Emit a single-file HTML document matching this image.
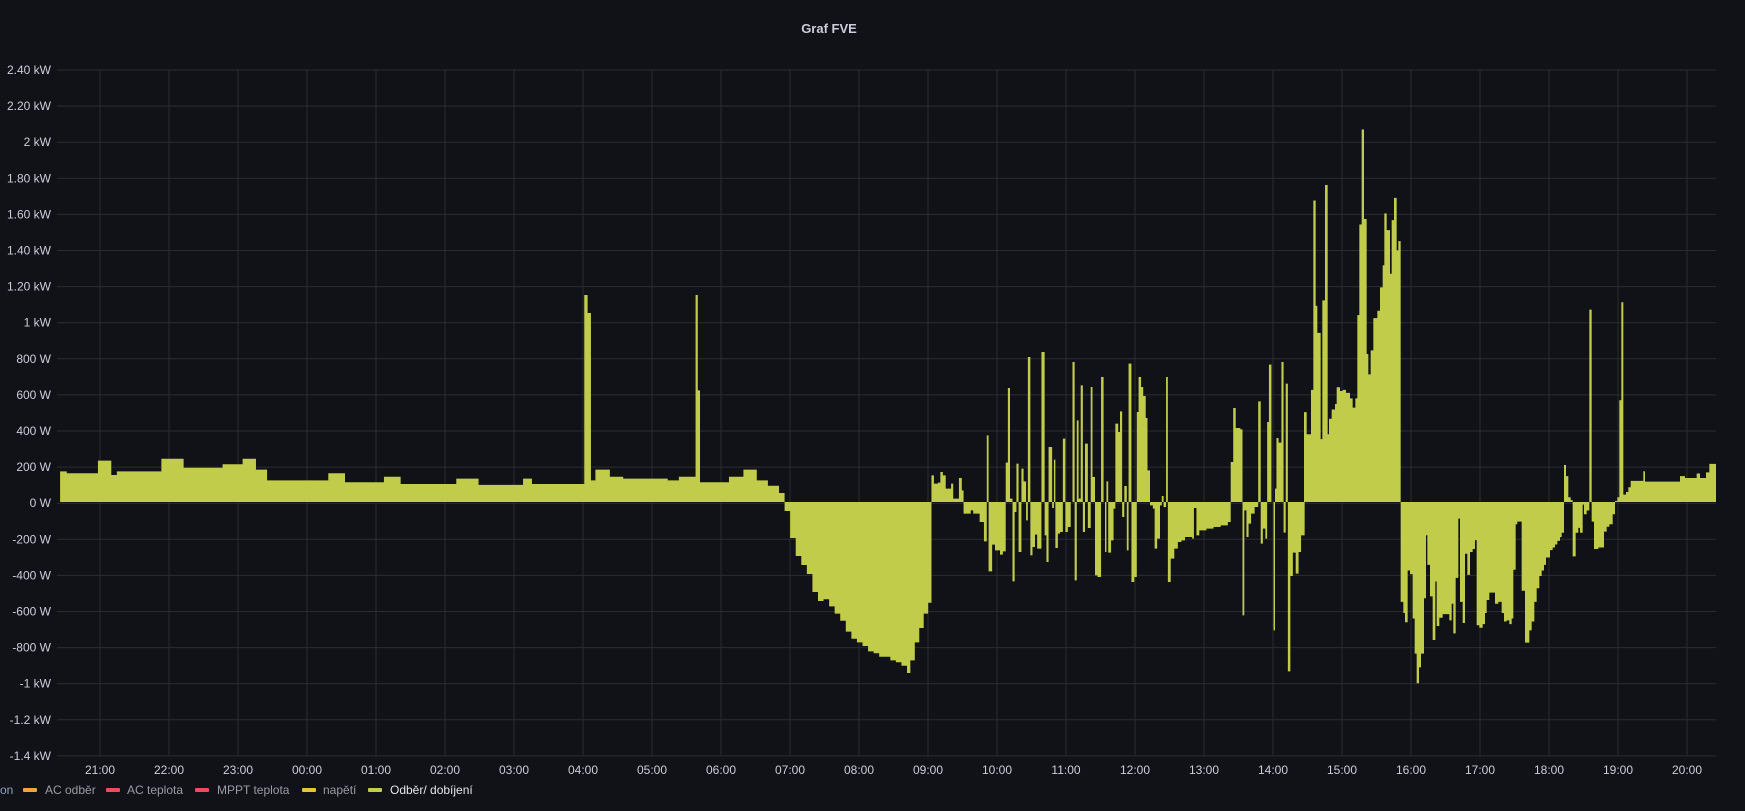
<!DOCTYPE html>
<html><head><meta charset="utf-8"><style>
html,body{margin:0;padding:0;background:#111217;width:1745px;height:811px;overflow:hidden;font-family:"Liberation Sans",sans-serif;}
svg{position:absolute;left:0;top:0}
</style></head><body>
<svg id="s" width="1745" height="811" xmlns="http://www.w3.org/2000/svg">
<text x="829" y="33" fill="#ccccdc" font-size="13" font-weight="bold" text-anchor="middle" font-family="Liberation Sans, sans-serif">Graf FVE</text>
<g id="grid" stroke="#2b2c32" stroke-width="1"></g>
<g id="ylab" fill="#ccccdc" font-size="12" text-anchor="end" font-family="Liberation Sans, sans-serif"></g>
<g id="xlab" fill="#ccccdc" font-size="12" text-anchor="middle" font-family="Liberation Sans, sans-serif"></g>
<path id="bars" fill="#c0cc4a"></path>
<g font-size="12" font-family="Liberation Sans, sans-serif">
<text x="0" y="794" fill="#8ea0c0">on</text>
<rect x="23" y="788" width="14" height="4" rx="1" fill="#f2a33c"/>
<text x="45" y="794" fill="#9b9ba8">AC odběr</text>
<rect x="106" y="788" width="14" height="4" rx="1" fill="#f2495c"/>
<text x="127" y="794" fill="#9b9ba8">AC teplota</text>
<rect x="195" y="788" width="14" height="4" rx="1" fill="#f2495c"/>
<text x="217" y="794" fill="#9b9ba8">MPPT teplota</text>
<rect x="302" y="788" width="14" height="4" rx="1" fill="#e8c43a"/>
<text x="323" y="794" fill="#9b9ba8">napětí</text>
<rect x="368" y="788" width="14" height="4" rx="1" fill="#c0cc4a"/>
<text x="390" y="794" fill="#e6e6f0">Odběr/ dobíjení</text>
</g>
</svg>
<script>
var NS="http://www.w3.org/2000/svg";
function el(p,t,a,txt){var e=document.createElementNS(NS,t);for(var k in a)e.setAttribute(k,a[k]);if(txt)e.textContent=txt;document.getElementById(p).appendChild(e);}
var labs=["2.40 kW","2.20 kW","2 kW","1.80 kW","1.60 kW","1.40 kW","1.20 kW","1 kW","800 W","600 W","400 W","200 W","0 W","-200 W","-400 W","-600 W","-800 W","-1 kW","-1.2 kW","-1.4 kW"];
for(var i=0;i<20;i++){var y=70+i*36.1;el("grid","line",{x1:57,x2:1716,y1:y,y2:y});el("ylab","text",{x:51,y:y+4},labs[i]);}
var hrs=["21:00","22:00","23:00","00:00","01:00","02:00","03:00","04:00","05:00","06:00","07:00","08:00","09:00","10:00","11:00","12:00","13:00","14:00","15:00","16:00","17:00","18:00","19:00","20:00"];
for(var k=0;k<24;k++){var x=100+69*k;el("grid","line",{x1:x,x2:x,y1:70,y2:756});el("xlab","text",{x:x,y:774},hrs[k]);}
var Z=502,segs=[];
// region A: display coords x, W value
var A=[[54,60,170],[60,88,160],[88,100,230],[100,105,150],[105,145,170],[145,165,240],[165,200,190],[200,218,210],[218,230,240],[230,240,180],[240,295,120],[295,310,160],[310,345,110],[345,360,140],[360,410,100],[410,430,130],[430,470,95],[470,478,130],[478,525,100],[525,528,1150],[528,531,1050],[531,535,120],[535,548,180],[548,560,140],[560,600,130],[600,610,120],[610,625,140],[625,627,1150],[627,629,620],[629,655,110],[655,668,140],[668,680,180],[680,690,120],[690,700,90],[700,705,50]];
var neg=[[705,-50],[710,-200],[715,-300],[720,-350],[725,-400],[730,-500],[735,-550],[740,-540],[745,-580],[750,-620],[755,-660],[760,-720],[765,-760],[770,-780],[775,-800],[780,-830],[785,-840],[790,-860],[795,-860],[800,-880],[805,-890],[810,-910],[815,-950],[818,-880],[822,-780],[826,-700],[830,-620],[834,-560],[837,0]];
for(var i=0;i<neg.length-1;i++)A.push([neg[i][0],neg[i+1][0],neg[i][1]]);
A.forEach(function(s){segs.push([s[0]*1.1129,s[1]*1.1129,Z-s[2]*0.18]);});
// region B: zoom4 coords
var B=[[480,487,440],[487,498,465],[498,505,462],[505,512,430],[512,520,440],[520,535,480],[535,541,465],[541,557,510],[557,565,448],[565,570,485],[570,590,555],[590,597,545],[597,615,555],[615,627,580],[627,635,638],[635,640,320],[640,650,728],[650,658,648],[658,672,665],[672,680,678],[680,688,668],[688,694,402],[694,700,178],[700,707,510],[707,713,758],[713,718,550],[718,724,405],[724,732,670],[732,738,420],[738,745,458],[745,750,575],[750,757,85],[757,763,680],[763,770,655],[770,776,618],[776,788,660],[788,797,70],[797,802,620],[802,808,700],[808,818,355],[818,823,538],[823,827,393],[827,834,658],[834,840,615],[840,848,610],[848,855,330],[855,862,610],[862,870,595],[870,875,520],[875,881,100],[881,887,755],[887,892,275],[892,898,510],[898,904,170],[904,910,610],[910,918,345],[918,926,598],[926,931,175],[931,938,445],[938,945,740],[945,955,745],[955,962,145],[962,966,520],[966,970,670],[970,975,458],[975,983,672],[983,990,635],[990,995,540],[995,1003,285],[1003,1008,310],[1008,1014,248],[1014,1020,565],[1020,1027,472],[1027,1032,665],[1032,1040,105],[1040,1048,760],[1048,1055,745],[1055,1060,250],[1060,1067,145],[1067,1073,175],[1073,1080,202],[1080,1085,268],[1085,1092,425],[1092,1100,530],[1100,1105,540],[1105,1112,660],[1112,1120,630],[1120,1125,530],[1125,1130,502],[1130,1137,535],[1137,1142,145],[1142,1150,760],[1150,1160,690],[1160,1170,660],[1170,1180,640],[1180,1190,635],[1190,1210,625],[1210,1215,630],[1215,1222,538],[1222,1230,620],[1230,1250,605],[1250,1270,600],[1270,1290,595],[1290,1310,590],[1310,1318,580],[1318,1325,400],[1325,1332,238],[1332,1345,298],[1345,1351,302],[1351,1356,860],[1356,1362,545],[1362,1368,625],[1368,1375,585],[1375,1385,555],[1385,1395,535],[1395,1402,218],[1402,1408,645],[1408,1415,600],[1415,1420,630],[1420,1425,280],[1425,1432,108],[1432,1438,520],[1438,1442,905],[1442,1446,480],[1446,1452,328],[1452,1460,342],[1460,1466,100],[1466,1472,612],[1472,1478,165],[1478,1485,1028],[1485,1492,742],[1492,1500,672],[1500,1508,735],[1508,1515,670],[1515,1525,620]];
B.forEach(function(s){segs.push([760+s[0]/2.8,760+s[1]/2.8,Z+(s[2]-520)/3]);});
// region C: zoom5 coords
var C=[[72,80,822],[80,93,882],[93,100,762],[100,107,250],[107,112,535],[112,122,608],[122,127,895],[127,135,520],[135,143,208],[143,147,882],[147,155,840],[155,165,815],[165,170,800],[170,180,755],[180,188,765],[188,198,762],[198,210,770],[210,218,785],[218,226,810],[226,232,785],[232,238,560],[238,245,315],[245,252,58],[252,260,300],[260,265,665],[265,272,720],[272,280,655],[280,292,568],[292,300,548],[300,308,485],[308,313,425],[313,320,285],[320,330,330],[330,335,448],[335,342,303],[342,350,243],[350,355,385],[355,362,360],[362,370,1335],[370,375,1365],[375,383,1390],[383,390,1250],[390,398,1260],[398,404,1380],[404,410,1475],[410,417,1555],[417,423,1512],[423,432,1475],[432,438,1325],[438,442,1155],[442,450,1235],[450,458,1320],[458,466,1438],[466,470,1280],[470,478,1400],[478,488,1378],[488,508,1368],[508,515,1385],[515,520,1340],[520,527,1420],[527,535,1270],[535,540,1110],[540,548,1335],[548,555,1392],[555,562,1205],[562,570,1262],[570,578,1200],[578,585,1192],[585,590,1168],[590,598,1398],[598,608,1405],[608,615,1395],[615,620,1365],[620,628,1330],[628,645,1310],[645,655,1340],[655,665,1335],[665,672,1365],[672,680,1388],[680,688,1385],[688,695,1395],[695,700,1380],[700,707,1248],[707,712,1125],[712,725,1118],[725,735,1305],[735,748,1445],[748,755,1412],[755,763,1388],[763,770,1335],[770,778,1298],[778,785,1265],[785,792,1250],[792,798,1235],[798,810,1215],[810,818,1195],[818,825,1188],[825,832,1180],[832,840,1170],[840,845,1160],[845,852,1148],[852,858,965],[858,865,995],[865,872,1052],[872,878,1060],[878,887,1212],[887,895,1148],[895,900,1135],[900,908,1148],[908,912,1072],[912,920,1098],[920,928,1088],[928,935,545],[935,942,1118],[942,955,1192],[955,965,1188],[965,972,1188],[972,980,1145],[980,988,1132],[988,998,1125],[998,1005,1098],[1005,1012,1062],[1012,1018,1052],[1018,1024,790],[1024,1030,525],[1030,1038,1045],[1038,1045,1038],[1045,1052,1025],[1052,1090,1008],[1090,1095,982],[1095,1100,1010],[1100,1200,1010],[1200,1215,995],[1215,1250,1000],[1250,1260,988],[1260,1278,1000],[1278,1288,985],[1288,1308,962]];
C.forEach(function(s){segs.push([1280+s[0]/3,1280+s[1]/3,Z+(s[2]-1065)/2.703]);});
var d="";
segs.forEach(function(s){var x0=s[0].toFixed(2),x1=s[1].toFixed(2),y=s[2].toFixed(2);d+="M"+x0+" "+Z+"V"+y+"H"+x1+"V"+Z+"Z";});
document.getElementById("bars").setAttribute("d",d);
</script>
</body></html>
